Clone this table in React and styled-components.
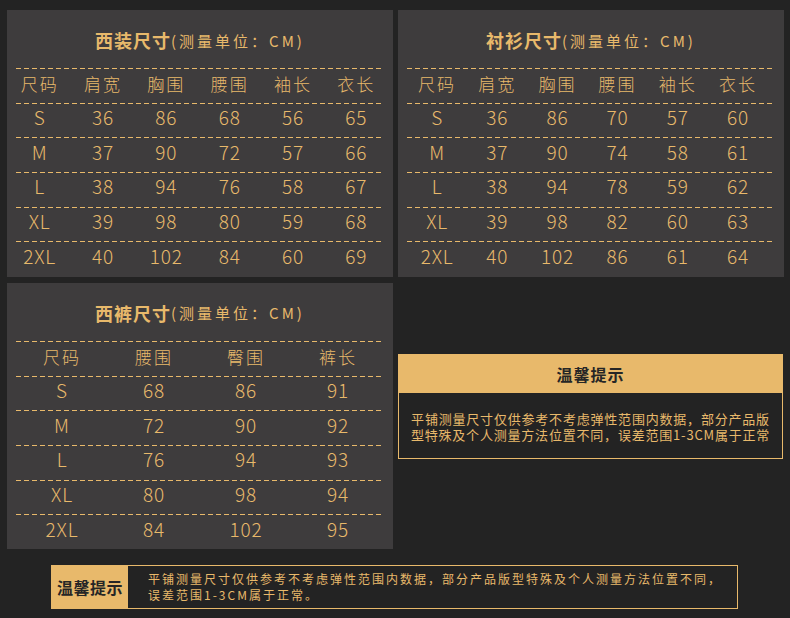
import React from "react";
import styled, { createGlobalStyle } from "styled-components";

const GOLD = "#e8b96b";

const Global = createGlobalStyle`
  html, body { margin: 0; padding: 0; background: #232323; }
  body { font-family: "Noto Sans CJK SC", "Noto Sans", sans-serif; }
`;

const Page = styled.div`
  width: 790px;
  height: 618px;
  background: #232323;
  box-sizing: border-box;
  padding: 10px 6px 0 7px;
  display: flex;
  flex-direction: column;
`;

const Grid = styled.div`
  display: grid;
  grid-template-columns: 386px 386px;
  grid-template-rows: 267px 266px;
  column-gap: 5px;
  row-gap: 6px;
`;

const Panel = styled.section`
  background: #3e3c3d;
  display: flex;
  flex-direction: column;
`;

const Title = styled.div`
  height: 58px;
  box-sizing: border-box;
  padding-top: 2px;
  display: flex;
  align-items: center;
  justify-content: center;
  color: ${GOLD};
  white-space: nowrap;
`;

const TitleMain = styled.span`
  font-size: 18px;
  font-weight: 700;
  letter-spacing: 1px;
`;

const TitleUnit = styled.span`
  font-size: 15px;
  font-weight: 400;
  letter-spacing: 3px;
`;

const Divider = styled.div`
  height: 1px;
  margin: 0 10px 0 9px;
  background: repeating-linear-gradient(
    to right,
    ${GOLD} 0 5px,
    transparent 5px 8px
  );
`;

const Row = styled.div`
  height: 33.7px;
  box-sizing: border-box;
  display: grid;
  grid-template-columns: repeat(${(p) => p.$cols}, 1fr);
  align-items: center;
  padding: 0 ${(p) => p.$padR}px ${(p) => (p.$head ? 4 : 8)}px
    ${(p) => p.$padL}px;
  color: ${GOLD};
`;

const Cell = styled.div`
  text-align: center;
  font-size: ${(p) => (p.$head ? "17px" : "19px")};
  font-weight: 300;
  letter-spacing: ${(p) => (p.$head ? "2px" : "0.8px")};
  line-height: 1;
  white-space: nowrap;
`;

const RightCell = styled.div`
  align-self: start;
  margin-top: 71px;
`;

const TipBox = styled.div`
  border: 1px solid ${GOLD};
  box-sizing: border-box;
  width: 385px;
  height: 105px;
  display: flex;
  flex-direction: column;
`;

const TipHead = styled.div`
  height: 38px;
  background: ${GOLD};
  color: #262626;
  font-size: 16px;
  font-weight: 700;
  letter-spacing: 1px;
  display: flex;
  align-items: center;
  justify-content: center;
`;

const TipBody = styled.div`
  flex: 1;
  display: flex;
  flex-direction: column;
  align-items: center;
  justify-content: center;
  text-align: center;
  color: ${GOLD};
  font-size: 13px;
  letter-spacing: 0.8px;
  padding-top: 3px;
  white-space: nowrap;
`;

const TipLine = styled.div`
  height: 16px;
  line-height: 16px;
  overflow: visible;
`;

const Bottom = styled.div`
  margin: 16px 0 0 44px;
  width: 687px;
  height: 44px;
  box-sizing: border-box;
  border: 1px solid ${GOLD};
  display: flex;
`;

const BottomLabel = styled.div`
  width: 76px;
  background: ${GOLD};
  color: #262626;
  font-size: 16px;
  font-weight: 700;
  letter-spacing: 0.5px;
  display: flex;
  align-items: center;
  justify-content: center;
  white-space: nowrap;
`;

const BottomText = styled.div`
  padding: 0 0 0 20px;
  display: flex;
  align-items: center;
  color: ${GOLD};
  font-size: 12px;
  letter-spacing: 2px;
  line-height: 16px;
  white-space: nowrap;
`;

const tables = [
  {
    name: "西装尺寸",
    padL: 1,
    padR: 5,
    head: ["尺码", "肩宽", "胸围", "腰围", "袖长", "衣长"],
    rows: [
      ["S", "36", "86", "68", "56", "65"],
      ["M", "37", "90", "72", "57", "66"],
      ["L", "38", "94", "76", "58", "67"],
      ["XL", "39", "98", "80", "59", "68"],
      ["2XL", "40", "102", "84", "60", "69"],
    ],
  },
  {
    name: "衬衫尺寸",
    padL: 9,
    padR: 16,
    head: ["尺码", "肩宽", "胸围", "腰围", "袖长", "衣长"],
    rows: [
      ["S", "36", "86", "70", "57", "60"],
      ["M", "37", "90", "74", "58", "61"],
      ["L", "38", "94", "78", "59", "62"],
      ["XL", "39", "98", "82", "60", "63"],
      ["2XL", "40", "102", "86", "61", "64"],
    ],
  },
  {
    name: "西裤尺寸",
    padL: 9,
    padR: 9,
    head: ["尺码", "腰围", "臀围", "裤长"],
    rows: [
      ["S", "68", "86", "91"],
      ["M", "72", "90", "92"],
      ["L", "76", "94", "93"],
      ["XL", "80", "98", "94"],
      ["2XL", "84", "102", "95"],
    ],
  },
];

function SizeTable({ t }) {
  const cols = t.head.length;
  return (
    <Panel>
      <Title>
        <TitleMain>{t.name}</TitleMain>
        <TitleUnit>(测量单位：CM)</TitleUnit>
      </Title>
      <Divider />
      <Row $cols={cols} $padL={t.padL} $padR={t.padR} $head>
        {t.head.map((h) => (
          <Cell key={h} $head>
            {h}
          </Cell>
        ))}
      </Row>
      {t.rows.map((r) => (
        <React.Fragment key={r[0]}>
          <Divider />
          <Row $cols={cols} $padL={t.padL} $padR={t.padR}>
            {r.map((v, i) => (
              <Cell key={i}>{v}</Cell>
            ))}
          </Row>
        </React.Fragment>
      ))}
    </Panel>
  );
}

export default function App() {
  return (
    <>
      <Global />
      <Page>
        <Grid>
          <SizeTable t={tables[0]} />
          <SizeTable t={tables[1]} />
          <SizeTable t={tables[2]} />
          <RightCell>
            <TipBox>
              <TipHead>温馨提示</TipHead>
              <TipBody>
                <TipLine>平铺测量尺寸仅供参考不考虑弹性范围内数据，部分产品版</TipLine>
                <TipLine>型特殊及个人测量方法位置不同，误差范围1-3CM属于正常</TipLine>
              </TipBody>
            </TipBox>
          </RightCell>
        </Grid>
        <Bottom>
          <BottomLabel>温馨提示</BottomLabel>
          <BottomText>
            平铺测量尺寸仅供参考不考虑弹性范围内数据，部分产品版型特殊及个人测量方法位置不同，
            <br />
            误差范围1-3CM属于正常。
          </BottomText>
        </Bottom>
      </Page>
    </>
  );
}
